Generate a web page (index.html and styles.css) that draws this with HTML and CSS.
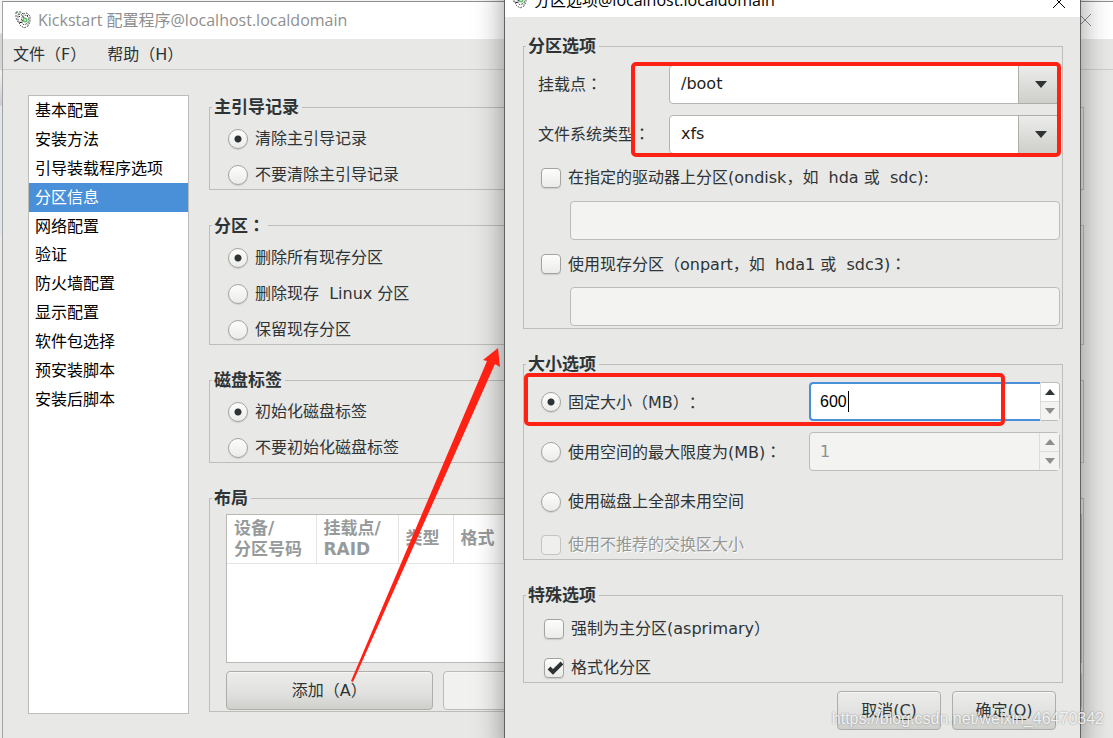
FILE: index.html
```html
<!DOCTYPE html>
<html lang="zh-CN">
<head>
<meta charset="utf-8">
<title>Kickstart 配置程序</title>
<link rel="stylesheet" href="styles.css">
</head>
<body>
<svg class="defs" aria-hidden="true">
  <symbol id="app-icon" viewBox="0 0 16 18">
    <g fill="none" stroke="#555" stroke-width="1" stroke-dasharray="2 1">
      <path d="M1 1h5l2 2M1 1v6l2 4 2 2M3 3l4 1 2 3-1 4-3 1-2-3z"/>
      <path d="M8 3l4-1 3 3v6l-2 4-4 2-4-3"/>
      <path d="M7 6l4-2 3 3-1 5-4 2-3-3z"/>
    </g>
    <path d="M4 5h1v1H4zM7 9h1v1H7zM12 4h1v1h-1zM5 11h1v1H5z" fill="#222"/>
    <circle cx="10" cy="9" r="2.5" fill="#5fc26a"/>
    <path d="M9 9h2M10 8v2" stroke="#d4f5d4" stroke-width="1"/>
    <path d="M3 2h3M12 14l2-2" stroke="#8fd695" stroke-width="1"/>
  </symbol>
  <symbol id="close" viewBox="0 0 12 12">
    <path d="M0 0l12 12M12 0L0 12" fill="none" stroke="currentColor" stroke-width="1"/>
  </symbol>
  <symbol id="down" viewBox="0 0 12 7"><path d="M0 0h12L6 7z" fill="currentColor"/></symbol>
  <symbol id="up" viewBox="0 0 12 7"><path d="M0 7h12L6 0z" fill="currentColor"/></symbol>
</svg>

<div class="desktop">
  <main class="window">
    <header class="titlebar">
      <svg class="app-icon"><use href="#app-icon"/></svg>
      <h1 class="title">Kickstart 配置程序@localhost.localdomain</h1>
      <button class="close" type="button" aria-label="关闭"><svg><use href="#close"/></svg></button>
    </header>
    <nav class="menubar">
      <button type="button">文件（F）</button>
      <button type="button">帮助（H）</button>
    </nav>
    <div class="content">
      <nav class="sidebar">
        <ul class="pages">
          <li><button type="button">基本配置</button></li>
          <li><button type="button">安装方法</button></li>
          <li><button type="button">引导装载程序选项</button></li>
          <li><button type="button" class="selected" aria-current="page">分区信息</button></li>
          <li><button type="button">网络配置</button></li>
          <li><button type="button">验证</button></li>
          <li><button type="button">防火墙配置</button></li>
          <li><button type="button">显示配置</button></li>
          <li><button type="button">软件包选择</button></li>
          <li><button type="button">预安装脚本</button></li>
          <li><button type="button">安装后脚本</button></li>
        </ul>
      </nav>
      <form class="panel">
        <fieldset class="group choices">
          <legend>主引导记录</legend>
          <label class="choice"><input type="radio" name="mbr" checked>清除主引导记录</label>
          <label class="choice"><input type="radio" name="mbr">不要清除主引导记录</label>
        </fieldset>
        <fieldset class="group choices">
          <legend>分区<span class="colon" lang="zh-TW">：</span></legend>
          <label class="choice"><input type="radio" name="parts" checked>删除所有现存分区</label>
          <label class="choice"><input type="radio" name="parts">删除现存&nbsp; Linux 分区</label>
          <label class="choice"><input type="radio" name="parts">保留现存分区</label>
        </fieldset>
        <fieldset class="group choices">
          <legend>磁盘标签</legend>
          <label class="choice"><input type="radio" name="disklabel" checked>初始化磁盘标签</label>
          <label class="choice"><input type="radio" name="disklabel">不要初始化磁盘标签</label>
        </fieldset>
        <fieldset class="group layout">
          <legend>布局</legend>
          <div class="table-frame">
            <table class="devices">
              <colgroup><col class="col-device"><col class="col-mount"><col class="col-type"><col></colgroup>
              <thead>
                <tr><th scope="col">设备/<br>分区号码</th><th scope="col">挂载点/<br>RAID</th><th scope="col">类型</th><th scope="col">格式</th></tr>
              </thead>
            </table>
          </div>
          <div class="layout-actions">
            <button class="btn" type="button">添加（A）</button>
            <button class="btn" type="button" disabled></button>
            <button class="btn" type="button" disabled></button>
            <button class="btn" type="button" disabled></button>
          </div>
        </fieldset>
      </form>
    </div>
  </main>

  <section class="dialog" role="dialog" aria-labelledby="dialog-title">
    <header class="titlebar">
      <svg class="app-icon"><use href="#app-icon"/></svg>
      <h2 class="title" id="dialog-title">分区选项@localhost.localdomain</h2>
      <button class="close" type="button" aria-label="关闭"><svg><use href="#close"/></svg></button>
    </header>
    <form class="dialog-body">
      <fieldset class="group part-options">
        <legend>分区选项</legend>
        <div class="field">
          <label for="mount">挂载点<span class="colon" lang="zh-TW">：</span></label>
          <div class="combo">
            <input id="mount" type="text" value="/boot">
            <button class="combo-arrow" type="button" aria-label="展开"><svg><use href="#down"/></svg></button>
          </div>
        </div>
        <div class="field">
          <label for="fstype">文件系统类型<span class="colon" lang="zh-TW">：</span></label>
          <div class="combo">
            <select id="fstype"><option>xfs</option></select>
            <span class="combo-arrow"><svg><use href="#down"/></svg></span>
          </div>
        </div>
        <label class="choice indent"><input type="checkbox">在指定的驱动器上分区(ondisk，如&nbsp; hda 或&nbsp; sdc):</label>
        <input class="entry" type="text" disabled aria-label="ondisk">
        <label class="choice indent"><input type="checkbox"><span>使用现存分区（onpart，如&nbsp; hda1 或&nbsp; sdc3)<span class="colon" lang="zh-TW">：</span></span></label>
        <input class="entry" type="text" disabled aria-label="onpart">
      </fieldset>

      <fieldset class="group size-options">
        <legend>大小选项</legend>
        <div class="size-row">
          <label class="choice"><input type="radio" name="size" checked><span>固定大小（MB）<span class="colon" lang="zh-CN">：</span></span></label>
          <div class="spin focused">
            <input type="text" value="600" aria-label="固定大小">
            <span class="caret"></span>
            <div class="steps">
              <button type="button" aria-label="增加"><svg><use href="#up"/></svg></button>
              <button type="button" aria-label="减少" disabled><svg><use href="#down"/></svg></button>
            </div>
          </div>
        </div>
        <div class="size-row">
          <label class="choice"><input type="radio" name="size"><span>使用空间的最大限度为(MB)<span class="colon" lang="zh-TW">：</span></span></label>
          <div class="spin">
            <input type="text" value="1" disabled aria-label="最大限度">
            <div class="steps">
              <button type="button" aria-label="增加" disabled><svg><use href="#up"/></svg></button>
              <button type="button" aria-label="减少" disabled><svg><use href="#down"/></svg></button>
            </div>
          </div>
        </div>
        <div class="size-row">
          <label class="choice"><input type="radio" name="size">使用磁盘上全部未用空间</label>
        </div>
        <label class="choice off"><input type="checkbox" disabled>使用不推荐的交换区大小</label>
      </fieldset>

      <fieldset class="group special-options">
        <legend>特殊选项</legend>
        <label class="choice"><input type="checkbox">强制为主分区(asprimary）</label>
        <label class="choice"><input type="checkbox" checked>格式化分区</label>
      </fieldset>

      <div class="dialog-actions">
        <button class="btn" type="button">取消(<u>C</u>)</button>
        <button class="btn" type="button">确定(<u>O</u>)</button>
      </div>
    </form>
  </section>

  <div class="mark mark-fields"></div>
  <div class="mark mark-size"></div>
  <svg class="arrow" viewBox="0 0 150 334" aria-hidden="true">
    <path d="M0 333L136 13L132 12L147 0L149 19L144 16L2 334z" fill="#ff2113"/>
  </svg>
  <div class="watermark">https://blog.csdn.net/weixin_46470342</div>
</div>
</body>
</html>
```
FILE: styles.css
```css
* { box-sizing: border-box; }

body {
  margin: 0;
  font: 16px/24px "DejaVu Sans", "Noto Sans CJK SC", sans-serif;
  text-spacing-trim: space-all;
  color: #2e3436;
}

button, input, select { font: inherit; color: inherit; margin: 0; }
button { background: none; border: 0; padding: 0; }
.defs { position: absolute; width: 0; height: 0; }
.colon { font-family: "Noto Sans CJK TC", sans-serif; }

.desktop {
  position: relative;
  min-height: 100vh;
  overflow: hidden;
  padding: 1px 0 0 2px;
  display: flex;
  background: linear-gradient(#f4f4f4 33px, #d6d6d6 34px, #d6d6d6 70px, #f2f2f2 71px, #c9cdd2 105px, #dfe6ee 106px, #dfe6ee 235px, #e9e9e9 236px);
}

/* Main window */
.window {
  flex: 1;
  display: flex;
  flex-direction: column;
  border-left: 1px solid #a3a3a3;
  border-top: 1px solid #8c8f94;
  background: #e8e8e6;
}
.titlebar {
  display: flex;
  align-items: center;
  background: #fff;
}
.window > .titlebar { height: 37px; padding: 0 22px 2px 12px; color: #8f8f8f; }
.app-icon { width: 16px; height: 18px; margin-right: 7px; }
.title {
  flex: 1;
  margin: 0;
  font: 16px/24px "Open Sans", "Noto Sans CJK SC", sans-serif;
  white-space: nowrap;
}
.close { display: flex; }
.close svg { width: 12px; height: 12px; }

.menubar {
  display: flex;
  gap: 21px;
  height: 31px;
  padding: 1px 10px 0;
  border-bottom: 1px solid #cdcdcb;
}

.content { flex: 1; display: flex; gap: 20px; padding: 25px 29px 24px 25px; }
.sidebar {
  width: 161px;
  padding-top: 1px;
  border: 1px solid #bcbcb8;
  background: #fff;
}
.pages {
  list-style: none;
  margin: 0;
  padding: 0;
  height: 317px;
  display: grid;
  grid-template-rows: repeat(11, 1fr);
}
.pages li { display: flex; }
.pages button { flex: 1; padding-left: 6px; text-align: left; color: #000; }
.pages .selected { background: #4a90d9; color: #fff; }

.panel { flex: 1; display: flex; flex-direction: column; gap: 23px; min-width: 0; }

/* Framed groups */
.group {
  margin: 0;
  padding: var(--top) var(--right) var(--bottom) var(--left);
  border: 1px solid #bdbdba;
  min-width: 0;
}
.group legend {
  margin-left: calc(2px - var(--left));
  padding: 0 3px 0 2px;
  font-size: 17px;
  font-weight: bold;
  line-height: 24px;
}
.choices {
  --top: 8px; --right: 0px; --bottom: 2px; --left: 18px;
  display: flex;
  flex-direction: column;
  gap: 12px;
}

.choice { display: flex; align-items: center; gap: 7px; white-space: nowrap; }
.choice input {
  appearance: none;
  width: 20px;
  height: 20px;
  flex: none;
  border: 1px solid #a4a49f;
  background: linear-gradient(#fdfdfd, #ebebe9);
  box-shadow: 0 1px 1px rgba(0, 0, 0, .12);
}
.choice input[type="radio"] { border-radius: 50%; }
.choice input[type="radio"]:checked {
  background: radial-gradient(circle, #2e3436 3px, transparent 4px), linear-gradient(#fdfdfd, #ebebe9);
}
.choice input[type="checkbox"] { border-radius: 4px; }
.choice input[type="checkbox"]:checked {
  background: url("data:image/svg+xml,%3Csvg xmlns='http://www.w3.org/2000/svg' viewBox='0 0 18 18'%3E%3Cpath d='M4 9l4 4 9-9' fill='none' stroke='%232e3436' stroke-width='4'/%3E%3C/svg%3E"), linear-gradient(#fdfdfd, #ebebe9);
}
.choice input:disabled { border-color: #c4c4c0; background: #efefed; box-shadow: none; }
.off { color: #959794; text-shadow: 1px 1px 0 #fff; }

.layout { --top: 4px; --right: 1px; --bottom: 1px; --left: 16px; }
.table-frame {
  height: 149px;
  border: 1px solid #b8b8b4;
  background: #fff;
}
.devices { width: 100%; border-collapse: collapse; table-layout: fixed; }
.devices th {
  height: 48px;
  padding: 0 7px;
  border-right: 1px solid #e4e4e2;
  border-bottom: 1px solid #e4e4e2;
  font-size: 17px;
  line-height: 21px;
  text-align: left;
  color: #979a9b;
}
.col-device { width: 89px; }
.col-mount { width: 82px; }
.col-type { width: 55px; }
.layout-actions {
  display: grid;
  grid-template-columns: repeat(4, 1fr);
  gap: 10px;
  padding-top: 8px;
}

.btn {
  height: 39px;
  border: 1px solid #adada9;
  border-radius: 4px;
  background: linear-gradient(#ececea, #e0e0de 60%, #cececb);
  box-shadow: inset 0 1px 0 #f6f6f5;
}
.btn:disabled { background: #f1f1f0; border-color: #bcbcb8; }

/* Dialog */
.dialog {
  position: absolute;
  top: -19px;
  bottom: -20px;
  left: 504px;
  right: 32px;
  border: 1px solid #626262;
  background: #e8e8e6;
  box-shadow: 0 0 28px rgba(0, 0, 0, .4);
}
.dialog > .titlebar { height: 35px; padding: 0 15px 0 6px; color: #000; }
.dialog .close svg { margin-top: 4px; }
.dialog-body {
  display: flex;
  flex-direction: column;
  gap: 23px;
  padding: 17px 17px 0 18px;
}
.dialog .group { display: flex; flex-direction: column; }
.dialog .choice { height: 25px; }

.part-options { --top: 7px; --right: 2px; --bottom: 2px; --left: 14px; gap: 11px; }
.field { display: grid; grid-template-columns: 131px 1fr; }
.field label { line-height: 36px; white-space: nowrap; }
.combo {
  display: grid;
  grid-template-columns: 1fr 42px;
  height: 39px;
}
.combo input, .combo select {
  grid-area: 1 / 1 / 2 / 3;
  appearance: none;
  min-width: 0;
  width: 100%;
  padding: 0 50px 2px 11px;
  border: 1px solid #b4b4b0;
  border-radius: 4px;
  background: #fff;
  color: #1c1f20;
}
.combo-arrow {
  grid-area: 1 / 2;
  display: flex;
  align-items: center;
  justify-content: center;
  padding-left: 3px;
  border: 1px solid #adada9;
  border-radius: 0 4px 4px 0;
  background: linear-gradient(#ececea, #cececb);
  pointer-events: none;
}
.combo-arrow svg { width: 12px; height: 7px; }
.indent { margin-left: 3px; }
.entry {
  height: 39px;
  margin-left: 32px;
  border: 1px solid #bcbcb8;
  border-radius: 4px;
  background: #f3f3f1;
}

.size-options { --top: 6px; --right: 2px; --bottom: 2px; --left: 17px; gap: 11px; }
.size-row {
  display: grid;
  grid-template-columns: 268px 1fr;
  align-items: center;
  min-height: 39px;
}
.spin {
  position: relative;
  display: flex;
  height: 39px;
  border: 1px solid #bcbcb8;
  border-radius: 4px;
  background: #f3f3f1;
  color: #8c8f90;
}
.spin input {
  flex: 1;
  min-width: 0;
  border: 0;
  padding: 0 10px;
  background: none;
}
.spin.focused { border: 0; background: #fff; color: #000; }
.focused input {
  padding: 0 9px;
  border: 2px solid #4a90d9;
  border-right: 0;
  border-radius: 4px 0 0 4px;
  font-family: "Liberation Sans", sans-serif;
}
.caret {
  position: absolute;
  left: 39px;
  top: 9px;
  width: 1px;
  height: 21px;
  background: #000;
}
.steps {
  width: 20px;
  display: flex;
  flex-direction: column;
  border-left: 1px solid #dcdcda;
}
.focused .steps { border: 1px solid #bcbcb8; border-left-color: #dcdcda; border-radius: 0 4px 4px 0; }
.steps button { flex: 1; display: flex; align-items: center; justify-content: center; color: #2e3436; }
.steps button + button { border-top: 1px solid #dcdcda; }
.steps button:disabled { color: #8c8f8f; background: #f3f3f1; }
.steps svg { width: 10px; height: 6px; }

.special-options { --top: 9px; --right: 2px; --bottom: 2px; --left: 20px; gap: 14px; }

.dialog-actions {
  display: flex;
  justify-content: flex-end;
  gap: 11px;
  margin-top: -15px;
  padding-right: 7px;
}
.dialog-actions .btn { width: 104px; }
u { text-underline-offset: 3px; }

/* Annotations */
.mark { position: absolute; border: 4px solid #ff2113; border-radius: 5px; }
.mark-fields { left: 631px; top: 62px; width: 430px; height: 95px; }
.mark-size { left: 524px; top: 373px; width: 481px; height: 53px; }
.arrow { position: absolute; left: 351px; top: 348px; width: 150px; height: 334px; }
.watermark {
  position: absolute;
  right: 9px;
  bottom: 7px;
  font: 16px/24px "Liberation Sans", sans-serif;
  color: rgba(255, 255, 255, .85);
  text-shadow: 0 0 2px rgba(0, 0, 0, .4);
}
```
